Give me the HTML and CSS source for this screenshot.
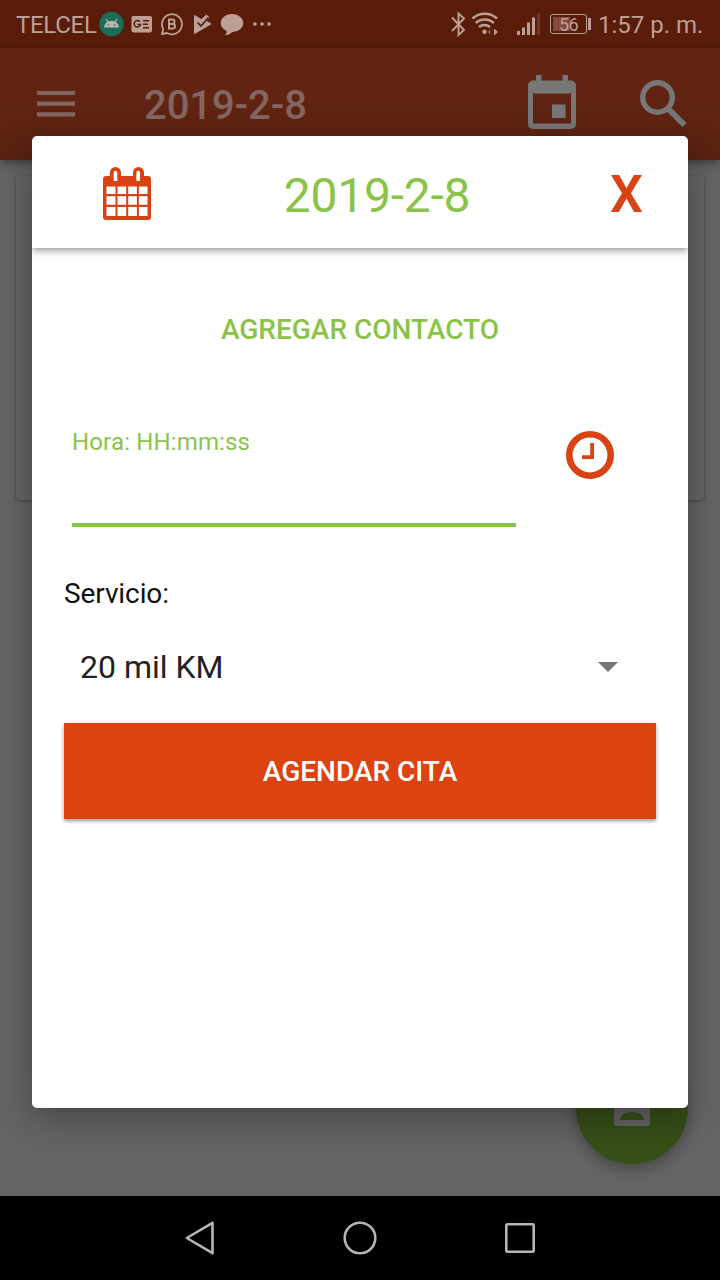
FILE: index.html
```html
<!DOCTYPE html>
<html lang="es">
<head>
<meta charset="utf-8">
<title>Agendar cita</title>
<link rel="stylesheet" href="styles.css">
</head>
<body>
<div class="screen">
  <header class="status">
    <span class="carrier">TELCEL</span>
    <svg class="notices" width="176" height="48" viewBox="98 0 176 48">
      <circle cx="111.500" cy="24" r="12.200" fill="#1d6c58"/>
      <path d="M104 27.500a7.500 6.800 0 0 1 15 0z" fill="#c1b2a7"/>
      <path d="M108 22l-2-3M115 22l2-3" stroke="#c1b2a7" stroke-width="1.200"/>
      <circle cx="108.500" cy="25" r=".8" fill="#1d6c58"/><circle cx="114.500" cy="25" r=".8" fill="#1d6c58"/>
      <rect x="131.500" y="16" width="20.500" height="16.500" rx="2" fill="#bd9f97"/>
      <path d="M139.800 21.700a3.200 3.200 0 1 0 .7 2.800h-3M143 20.800h6M143 24.300h5M143 27.800h6" fill="none" stroke="#581c08" stroke-width="1.500"/>
      <path d="M162 34l1.200-5a10 10 0 1 1 4 4z" fill="none" stroke="#bd9f97" stroke-width="1.800" stroke-linejoin="round"/>
      <path d="M169 19.500h3.300a2.200 2.200 0 0 1 0 4.400H169zM169 23.900h3.700a2.300 2.300 0 0 1 0 4.600H169z" fill="none" stroke="#bd9f97" stroke-width="2"/>
      <path d="M194.500 15.500l7 4 5-4.500 2.500 2.500-3 3.500 5 3-16.500 9.500z" fill="#bd9f97" stroke="#bd9f97" stroke-linejoin="round"/>
      <path d="M197.500 22.500l3.500 3.500 7.500-8.500" fill="none" stroke="#581c08" stroke-width="1.700"/>
      <path d="M232 14c6.300 0 11.300 4 11.300 9s-5 9-11.300 9c-1.200 2-3.500 3.200-7 3.200 1.400-1.400 1.800-2.600 1.600-4.200-3.600-1.600-5.900-4.500-5.900-8 0-5 5-9 11.300-9z" fill="#bd9f97"/>
      <circle cx="255" cy="24" r="1.800" fill="#bd9f97"/><circle cx="262" cy="24" r="1.800" fill="#bd9f97"/><circle cx="269" cy="24" r="1.800" fill="#bd9f97"/>
    </svg>
    <div class="system">
      <svg width="92" height="48" viewBox="450 0 92 48" fill="none" stroke="#bd9f97">
        <path d="M452 17.500l12 12.500-5.500 5V13.500l5.500 5L452 31" stroke-width="1.900"/>
        <path d="M472.500 18.500a18 18 0 0 1 24.500 0M475.800 23a13 13 0 0 1 18 0M479 27a8.500 8.500 0 0 1 11 0" stroke-width="2.500"/>
        <circle cx="484.500" cy="31.800" r="2.200" fill="#bd9f97" stroke="none"/>
        <path d="M490.500 29l-3 3 3 3z" fill="#875649" stroke="none"/><path d="M494 28.500l4 3.500-4 3.500z" fill="#bd9f97" stroke="none"/>
        <path d="M518.500 31v4M523.500 27.500V35M528.500 22.500V35M533.500 17.500V35" stroke-width="3"/>
        <path d="M538.500 13.500V35" stroke="#753c2d" stroke-width="2.500"/>
      </svg>
      <span class="battery"><span class="charge">56</span></span>
      <span class="clock">1:57 p. m.</span>
    </div>
  </header>
  <div class="appbar">
    <svg class="menu" width="38" height="28" viewBox="0 0 38 28"><path d="M0 3h38M0 13.700h38M0 24.300h38" stroke="#83665f" stroke-width="4.200"/></svg>
    <h1>2019-2-8</h1>
    <svg class="event" width="48" height="54" viewBox="0 0 48 54"><path fill="#777" fill-rule="evenodd" d="M8 0h5.500v5.500h21V0H40v5.500h3a5 5 0 0 1 5 5V49a5 5 0 0 1-5 5H5a5 5 0 0 1-5-5V10.500a5 5 0 0 1 5-5h3zM5 18.500V48.500h38V18.500zM24 29.500h13.500V43H24z"/></svg>
    <svg class="search" width="48" height="48" viewBox="0 0 48 48" fill="none" stroke="#777"><circle cx="17.500" cy="17.500" r="14.800" stroke-width="5.400"/><path d="M28 28.500L44.500 45" stroke-width="6"/></svg>
  </div>
  <main class="content">
    <div class="card"></div>
    <div class="fab"><svg width="48" height="48" viewBox="0 0 24 24"><path fill="#656565" fill-rule="evenodd" d="M4.500 3h15A1.500 1.500 0 0 1 21 4.500v15a1.500 1.500 0 0 1-1.500 1.500h-15A1.500 1.500 0 0 1 3 19.500v-15A1.500 1.500 0 0 1 4.500 3zM12 6a3 3 0 1 0 0 6 3 3 0 0 0 0-6zM6 18h12c0-2.500-3-4-6-4s-6 1.500-6 4z"/></svg></div>
  </main>
  <nav class="nav">
    <svg width="30" height="34" viewBox="0 0 30 34"><path d="M27.500 1.800v30.400L1.800 17z"/></svg>
    <svg width="34" height="34" viewBox="0 0 34 34"><circle cx="17" cy="17" r="15.300"/></svg>
    <svg width="30" height="30" viewBox="0 0 30 30"><rect x="1.300" y="1.300" width="27.400" height="27.400" rx="1"/></svg>
  </nav>
  <section class="dialog">
    <div class="dialog-head">
      <svg class="calendar" width="50" height="54" viewBox="0 0 50 54">
        <path fill="#d94314" fill-rule="evenodd" d="M4 9h4V5.500a5.500 5.500 0 0 1 11 0V9h12V5.500a5.500 5.500 0 0 1 11 0V9h4a3 3 0 0 1 3 3v38a3 3 0 0 1-3 3H4a3 3 0 0 1-3-3V12a3 3 0 0 1 3-3zM11.700 5.500V14h3.600V5.500a1.800 1.800 0 0 0-3.600 0zM34.400 5.500V14H38V5.500a1.800 1.800 0 0 0-3.600 0zM4.500 19.500v7.600h9v-7.600zM15.500 19.500v7.600h8.700v-7.600zM26.200 19.500v7.600h8.700v-7.600zM36.900 19.500v7.600h8.600v-7.600zM4.500 29.200v8.600h9v-8.600zM15.500 29.200v8.600h8.700v-8.600zM26.200 29.200v8.600h8.700v-8.600zM36.900 29.200v8.600h8.600v-8.600zM4.500 40v9h9v-9zM15.500 40v9h8.700v-9zM26.200 40v9h8.700v-9zM36.900 40v9h8.600v-9z"/>
      </svg>
      <h2>2019-2-8</h2>
      <span class="close">X</span>
    </div>
    <div class="form">
      <div class="add">AGREGAR CONTACTO</div>
      <div class="time-row">
        <div class="field">Hora: HH:mm:ss</div>
        <svg width="48" height="48" viewBox="0 0 48 48" fill="none" stroke="#d94314"><circle cx="24" cy="24" r="20.700" stroke-width="6.600"/><path d="M26.100 12v14.100H16" stroke-width="3.800"/></svg>
      </div>
      <div class="label">Servicio:</div>
      <div class="select"><span>20 mil KM</span><svg width="20" height="10" viewBox="0 0 20 10"><path d="M0 0h20L10 10z" fill="#757575"/></svg></div>
      <div class="submit">AGENDAR CITA</div>
    </div>
  </section>
</div>
</body>
</html>
```

FILE: styles.css
```css
* { box-sizing: border-box; }
body { margin: 0; font-family: Roboto, "Liberation Sans", sans-serif; }
svg { display: block; flex: none; }
h1, h2 { margin: 0; }
.screen { position: relative; width: 720px; height: 1280px; overflow: hidden; display: flex; flex-direction: column; background: #656565; }
.status { height: 48px; flex: none; display: flex; align-items: center; padding-left: 16px; background: #581c08; color: #bd9f97; white-space: nowrap; }
.carrier { width: 82px; font-size: 24px; line-height: 48px; padding-top: 2px; letter-spacing: -.3px; }
.system { margin-left: auto; display: flex; align-items: center; width: 270px; }
.battery { position: relative; width: 37px; height: 20px; margin-left: 8px; border: 1.500px solid #bd9f97; border-radius: 3px; padding: 2px; flex: none; }
.battery::after { content: ""; position: absolute; right: -5px; top: 3px; width: 3px; height: 12px; background: #bd9f97; }
.charge { display: block; height: 14px; font-size: 18px; line-height: 15px; text-align: center; letter-spacing: -.5px; background: linear-gradient(90deg, #824a3b 56%, transparent 56%); }
.clock { margin-left: 11px; padding-top: 2px; font-size: 24px; }
.appbar { height: 112px; flex: none; display: flex; align-items: center; padding-left: 37px; background: linear-gradient(#612412 50%, #592211); color: #83665f; box-shadow: 0 3px 8px rgba(0,0,0,.4); z-index: 1; }
.menu { margin-top: -1px; }
h1 { width: 452px; padding-left: 69px; margin-top: 4px; font-size: 40px; font-weight: 500; line-height: 48px; letter-spacing: -.1px; }
.event { margin: -5px 0 0 1px; }
.search { margin: -1px 0 0 64px; }
.content { flex: 1; display: flex; flex-direction: column; justify-content: space-between; padding: 16px 16px 32px; }
.card { height: 324px; border-radius: 4px; background: #656565; box-shadow: 0 1px 3px rgba(0,0,0,.35); }
.fab { align-self: flex-end; margin-right: 16px; width: 112px; height: 112px; border-radius: 50%; display: flex; align-items: center; justify-content: center; background: #374f18; box-shadow: 0 6px 14px rgba(0,0,0,.3); }
.nav { position: relative; z-index: 3; height: 84px; flex: none; background: #000; display: flex; align-items: center; justify-content: space-between; padding: 0 185px; }
.nav svg { fill: none; stroke: #b5b5b5; stroke-width: 2.600; stroke-linejoin: round; }
.dialog { position: absolute; z-index: 2; left: 32px; top: 136px; width: 656px; height: 972px; border-radius: 5px; background: #fff; box-shadow: 0 10px 36px rgba(0,0,0,.34); overflow: hidden; }
.dialog-head { height: 112px; display: flex; align-items: center; padding: 0 45px 0 70px; box-shadow: 0 2px 8px rgba(0,0,0,.45); justify-content: space-between; }
.calendar { margin-top: 3px; }
h2 { margin: 8px 8px 0 0; font-size: 48px; line-height: 56px; font-weight: 400; letter-spacing: -.25px; color: #8bc34a; }
.close { margin-top: 5px; font-size: 52px; line-height: 56px; font-weight: 600; color: #d94314; }
.form { padding: 56px 32px 0; }
.add { height: 48px; font-size: 28px; line-height: 52px; font-weight: 500; color: #8bc34a; text-align: center; }
.time-row { display: flex; justify-content: space-between; height: 143px; margin-top: 79px; padding: 0 42px 0 8px; }
.field { width: 444px; height: 96px; border-bottom: 4px solid #8bc34a; font-size: 24px; line-height: 22px; letter-spacing: .15px; color: #8bc34a; }
.label { font-size: 28px; line-height: 40px; letter-spacing: -.1px; color: #111; }
.select { display: flex; align-items: center; justify-content: space-between; height: 96px; margin-top: 5px; padding: 0 38px 0 16px; font-size: 32px; color: #222; }
.submit { height: 96px; margin-top: 8px; background: #dd4310; color: #fff; text-align: center; font-size: 28px; line-height: 98px; font-weight: 500; box-shadow: 0 2px 4px rgba(0,0,0,.4); }
```
